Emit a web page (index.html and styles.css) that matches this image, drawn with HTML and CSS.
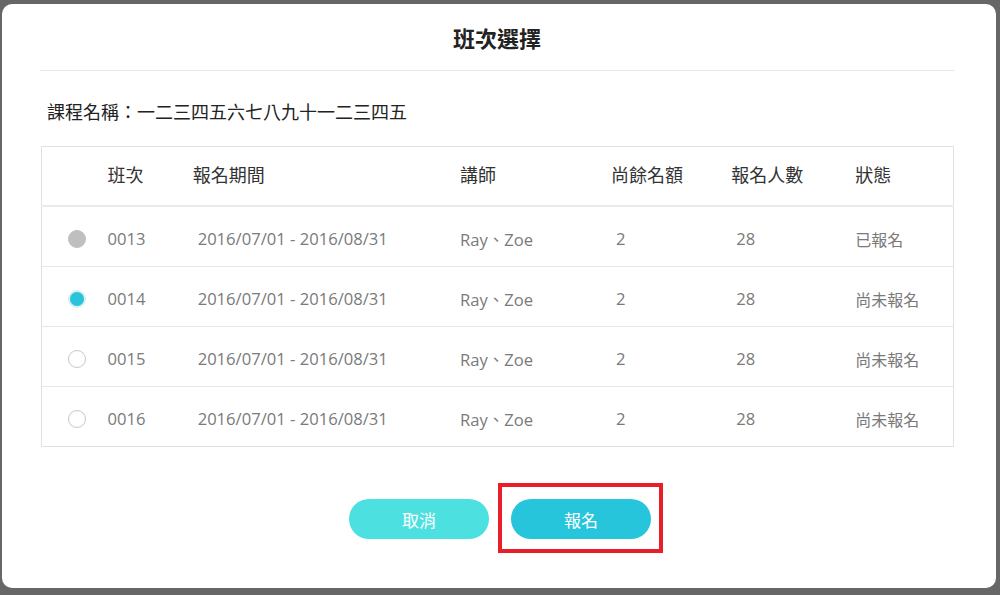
FILE: index.html
```html
<!DOCTYPE html>
<html lang="zh-Hant">
<head>
<meta charset="utf-8">
<title>班次選擇</title>
<link rel="stylesheet" href="styles.css">
</head>
<body>
<div class="dialog">
  <div class="dialog-head">班次選擇</div>
  <div class="course">課程名稱：一二三四五六七八九十一二三四五</div>
  <table class="classes">
    <colgroup>
      <col class="c-radio"><col class="c-no"><col class="c-period"><col class="c-teacher"><col class="c-left"><col class="c-count"><col class="c-status">
    </colgroup>
    <thead>
      <tr><th></th><th>班次</th><th>報名期間</th><th>講師</th><th>尚餘名額</th><th>報名人數</th><th>狀態</th></tr>
    </thead>
    <tbody>
      <tr><td><span class="radio disabled"></span></td><td>0013</td><td class="ind">2016/07/01 - 2016/08/31</td><td>Ray、Zoe</td><td class="ind">2</td><td class="ind">28</td><td class="cjk">已報名</td></tr>
      <tr><td><span class="radio checked"></span></td><td>0014</td><td class="ind">2016/07/01 - 2016/08/31</td><td>Ray、Zoe</td><td class="ind">2</td><td class="ind">28</td><td class="cjk">尚未報名</td></tr>
      <tr><td><span class="radio"></span></td><td>0015</td><td class="ind">2016/07/01 - 2016/08/31</td><td>Ray、Zoe</td><td class="ind">2</td><td class="ind">28</td><td class="cjk">尚未報名</td></tr>
      <tr><td><span class="radio"></span></td><td>0016</td><td class="ind">2016/07/01 - 2016/08/31</td><td>Ray、Zoe</td><td class="ind">2</td><td class="ind">28</td><td class="cjk">尚未報名</td></tr>
    </tbody>
  </table>
  <div class="actions">
    <button class="btn btn-cancel">取消</button>
    <span class="highlight-wrap">
      <button class="btn btn-ok">報名</button>
      <span class="highlight"></span>
    </span>
  </div>
</div>
</body>
</html>
```

FILE: styles.css
```css
html, body {
  margin: 0;
  padding: 0;
}
body {
  background: #676767;
  width: 1000px;
  height: 595px;
  overflow: hidden;
  font-family: "Open Sans", "Noto Sans CJK TC", sans-serif;
}
.dialog {
  margin: 4px 0 0 2px;
  width: 994px;
  height: 584px;
  background: #fff;
  border-radius: 10px;
  box-sizing: border-box;
  padding: 0 42px 0 38px;
}
.dialog-head {
  height: 66px;
  border-bottom: 1px solid #e6e6e6;
  text-align: center;
  line-height: 66px;
  font-family: "Noto Sans CJK TC", sans-serif;
  font-size: 22px;
  font-weight: 700;
  color: #222;
}
.course {
  margin: 26px 0 0 7px;
  height: 28px;
  line-height: 28px;
  font-family: "Noto Sans CJK TC", sans-serif;
  font-size: 18px;
  color: #222;
}
.classes {
  margin: 21px 0 0 1px;
  width: 913px;
  border-collapse: collapse;
  table-layout: fixed;
  border: 1px solid #e2e2e2;
}
.c-radio { width: 66px; }
.c-no { width: 85px; }
.c-period { width: 267px; }
.c-teacher { width: 151px; }
.c-left { width: 120px; }
.c-count { width: 124px; }
.c-status { width: 98px; }
.classes th {
  height: 54px;
  text-align: left;
  font-weight: 400;
  font-size: 18px;
  color: #333;
  font-family: "Noto Sans CJK TC", sans-serif;
  padding: 0 0 4px 0;
  border-bottom: 2px solid #ebebeb;
}
.classes td {
  height: 55px;
  padding: 4px 0 0 0;
  font-size: 16.6px;
  color: #7a7a7a;
  border-bottom: 1px solid #e6e6e6;
  font-family: "Open Sans", "Noto Sans CJK TC", sans-serif;
}
.classes td.cjk {
  font-size: 16px;
  font-family: "Noto Sans CJK TC", sans-serif;
}
.classes tbody tr:last-child td {
  border-bottom: none;
}
.classes td.ind {
  padding-left: 5px;
}
.radio {
  display: block;
  margin-left: 26px;
  width: 18px;
  height: 18px;
  border-radius: 50%;
  box-sizing: border-box;
  border: 1px solid #c8c8c8;
  background: #fff;
}
.radio.disabled {
  background: #bfbfbf;
  border-color: #bfbfbf;
}
.radio.checked {
  background: #29c4dc;
  border: 2px solid #d4eef2;
}
.actions {
  display: flex;
  justify-content: center;
  gap: 22px;
  margin-top: 52px;
  padding-left: 6px;
}
.btn {
  width: 140px;
  height: 40px;
  border: none;
  border-radius: 20px;
  color: #fff;
  font-family: "Noto Sans CJK TC", sans-serif;
  font-size: 17px;
  padding: 0;
}
.btn-cancel {
  background: #4de0e0;
}
.btn-ok {
  background: #26c5dc;
}
.highlight-wrap {
  position: relative;
  display: block;
}
.highlight {
  position: absolute;
  left: -13px;
  top: -16px;
  width: 165px;
  height: 70px;
  box-sizing: border-box;
  border: 4px solid #e81e28;
}
```
